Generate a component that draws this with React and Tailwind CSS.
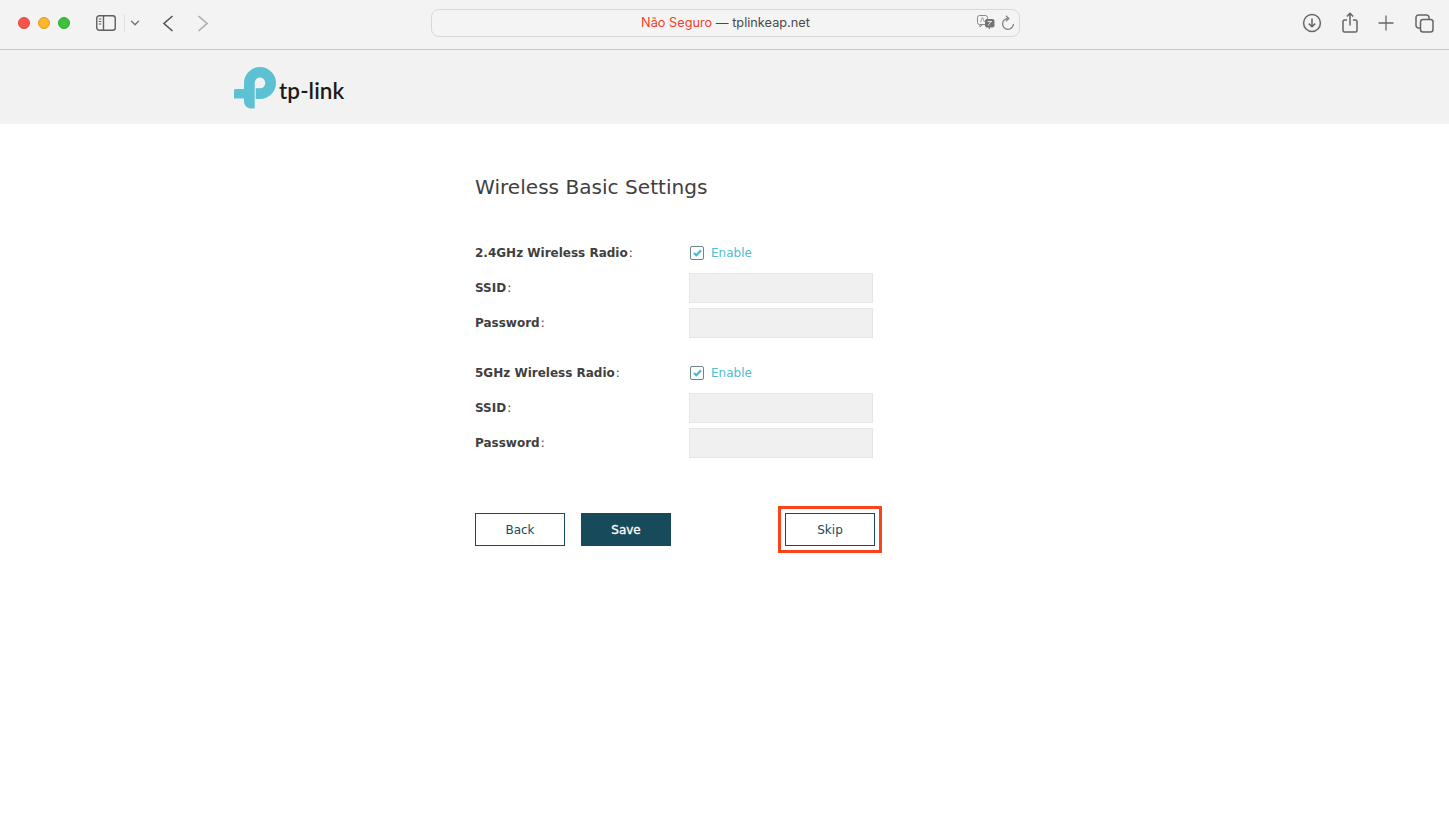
// TP-Link setup page inside a Safari window
import { ChevronDown, Plus } from "lucide-react";

const Toolbar = () => {
  return (
    <div className="h-[50px] bg-[#f3f3f3] border-b border-[#c6c6c6] flex items-center shrink-0 pb-[3px] font-['Inter',sans-serif]">
      <div className="flex gap-2 ml-[18px] w-[78px]">
        <div className="w-3 h-3 rounded-full bg-[#f6544c] border border-[#e2453d]"></div>
        <div className="w-3 h-3 rounded-full bg-[#fbb62e] border border-[#e09e22]"></div>
        <div className="w-3 h-3 rounded-full bg-[#3cc13f] border border-[#2dab30]"></div>
      </div>
      <svg width="20" height="16" viewBox="0 0 20 16" fill="none" className="text-[#5f5f5f]">
        <rect x="0.75" y="0.75" width="18.5" height="14.5" rx="2.5" stroke="currentColor" strokeWidth="1.4" />
        <path d="M7.5 1v14" stroke="currentColor" strokeWidth="1.4" />
        <path d="M2.8 4h2.6M2.8 6.5h2.6M2.8 9h2.6" stroke="currentColor" strokeWidth="1" />
      </svg>
      <div className="w-px h-[18px] bg-[#e0e0e0] ml-2"></div>
      <ChevronDown size={14} strokeWidth={2.2} className="text-[#707070] ml-[3px]" />
      <svg width="12" height="17" viewBox="0 0 12 17" fill="none" stroke="#555555" strokeWidth="1.6" className="ml-5">
        <path d="M10.500 1 2 8.500 10.500 16" />
      </svg>
      <svg width="12" height="17" viewBox="0 0 12 17" fill="none" stroke="#ababab" strokeWidth="1.6" className="ml-[23px]">
        <path d="M1.500 1 10 8.500 1.500 16" />
      </svg>

      <div className="w-[589px] h-[28px] ml-[222px] bg-[#f4f4f4] border border-[#d8d8d8] rounded-lg flex items-center relative">
        <div className="w-full text-center text-[12.750px] text-[#4a4a4a]">
          <span className="text-[#f4402c]">Não Seguro</span> — tplinkeap.net
        </div>
        <svg width="18" height="15" viewBox="0 0 18 15" fill="none" className="absolute right-[24px] top-[5px]">
          <rect x="0.500" y="0.500" width="10" height="9" rx="2" stroke="#8a8a8a" />
          <path d="M3 9.500V12l2.500-2.500" stroke="#8a8a8a" />
          <path d="M3.500 7 5.500 2.500 7.500 7" stroke="#8a8a8a" strokeWidth="0.800" />
          <rect x="8" y="4" width="9.500" height="8.500" rx="2" fill="#737373" />
          <path d="M13 12.500v2l-2.200-2z" fill="#737373" />
          <path d="M10.500 6.500h4.500M11 10.500l3-4" stroke="#fff" strokeWidth="0.800" />
        </svg>
        <svg width="14" height="16" viewBox="0 0 14 16" fill="none" stroke="#858585" strokeWidth="1.300" className="absolute right-[4px] top-[5px]">
          <path d="M7 3.500A5.400 5.400 0 1 0 12.400 9" />
          <path d="M5 .800 7.800 3.500 5 6.200" />
        </svg>
      </div>

      <div className="flex items-center ml-auto mr-[15px] text-[#666666]">
        <svg width="20" height="20" viewBox="0 0 20 20" fill="none" stroke="currentColor" strokeWidth="1.500">
          <circle cx="10" cy="10" r="8.400" />
          <path d="M10 5.500v8M6.800 10.600l3.200 3.200 3.200-3.200" />
        </svg>
        <svg width="16" height="21" viewBox="0 0 16 21" fill="none" stroke="currentColor" strokeWidth="1.500" className="ml-5 -mt-[2px]">
          <path d="M5 8H2.500A1.500 1.500 0 0 0 1 9.500v9A1.500 1.500 0 0 0 2.500 20h11a1.500 1.500 0 0 0 1.500-1.500v-9A1.500 1.500 0 0 0 13.500 8H11" />
          <path d="M8 13.500V1.500M4.800 4.500 8 1.300l3.200 3.200" />
        </svg>
        <Plus size={24} strokeWidth={1.300} className="ml-4" />
        <svg width="19" height="19" viewBox="0 0 19 19" fill="none" stroke="currentColor" strokeWidth="1.500" className="ml-[17px]">
          <rect x="5.500" y="5.500" width="12.500" height="12.500" rx="2.500" />
          <path d="M5.500 14H3.500A2.500 2.500 0 0 1 1 11.500V3.500A2.500 2.500 0 0 1 3.500 1h8A2.500 2.500 0 0 1 14 3.500v2" />
        </svg>
      </div>
    </div>
  );
};

const Logo = () => {
  return (
    <div className="flex items-end h-[42px]">
      <svg width="42" height="42" viewBox="0 0 42 42" fill="#5cc1d3">
        <path d="M10 16A16 16 0 1 1 26 32H21.700V21.200H26A5.300 5.300 0 1 0 20.700 15.800V41.500H17A7 7 0 0 1 10 34.500Z" />
        <path d="M0 31.500V23.500A1.500 1.500 0 0 1 1.500 22H10V31.500Z" />
      </svg>
      <span className="font-['Lato',sans-serif] text-[22.500px] leading-[30px] font-semibold text-[#1e1a1a] ml-[3px] mb-[3px] tracking-[0.1px]">tp-link</span>
    </div>
  );
};

const CheckRow = ({ label }) => {
  return (
    <div className="flex items-center h-[30px]">
      <div className="w-[214px] text-[12px] font-bold text-[#3f3f3f]">{label}<span className="font-normal ml-[1px]">:</span></div>
      <div className="w-[14px] h-[14px] ml-[1px] bg-white border border-[#6f8388] rounded-[2px] flex items-center justify-center">
        <svg width="9" height="8" viewBox="0 0 9 8" fill="none">
          <path d="M1 4 3.400 6.300 8 1.300" stroke="#45b8cc" strokeWidth="2.200" />
        </svg>
      </div>
      <span className="ml-[7px] text-[12px] text-[#4fbdd0]">Enable</span>
    </div>
  );
};

const InputRow = ({ label }) => {
  return (
    <div className="flex items-center h-[30px] mt-[5px]">
      <div className="w-[214px] text-[12px] font-bold text-[#3f3f3f]">{label}<span className="font-normal ml-[1px]">:</span></div>
      <input className="w-[184px] h-[30px] bg-[#f0f0f0] border border-[#e6e6e6] outline-none" />
    </div>
  );
};

const Button = ({ children, className }) => {
  return (
    <button className={"w-[90px] h-[33px] text-[12px] border border-[#174a5b] " + className}>{children}</button>
  );
};

export default function App() {
  return (
    <div className="h-[816px] bg-white flex flex-col font-['DejaVu_Sans',sans-serif] overflow-hidden">
      <Toolbar />
      <div className="h-[74px] bg-[#f2f2f2] pl-[234px] pt-[17px]">
        <Logo />
      </div>
      <div className="pl-[475px]">
        <h1 className="text-[20.100px] leading-[26px] text-[#3f3f3f] mt-[50px]">Wireless Basic Settings</h1>
        <div className="mt-[38px]">
          <CheckRow label="2.4GHz Wireless Radio" />
          <InputRow label="SSID" />
          <InputRow label="Password" />
        </div>
        <div className="mt-[20px]">
          <CheckRow label="5GHz Wireless Radio" />
          <InputRow label="SSID" />
          <InputRow label="Password" />
        </div>
        <div className="flex items-center mt-[48px]">
          <Button className="bg-white text-[#174a5b]">Back</Button>
          <Button className="bg-[#174a5b] text-white [-webkit-text-stroke:0.3px_white] ml-4">Save</Button>
          <div className="ml-[107px] p-[4px] border-[3px] border-[#f9431a]">
            <Button className="bg-white text-[#174a5b] block">Skip</Button>
          </div>
        </div>
      </div>
    </div>
  );
}
